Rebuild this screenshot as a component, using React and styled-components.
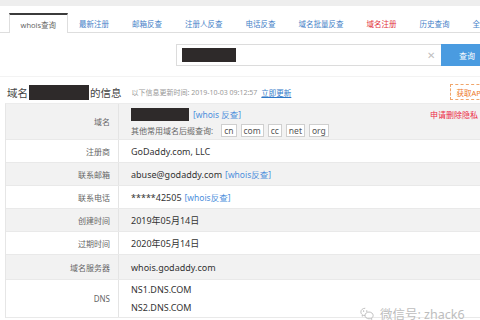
import React from "react";
import styled, { createGlobalStyle } from "styled-components";

const GlobalStyle = createGlobalStyle`
  html, body {
    margin: 0;
    padding: 0;
    overflow: hidden;
    background: #fff;
  }
  body {
    font-family: "Noto Sans", "Noto Sans CJK SC", sans-serif;
    color: #333;
  }
`;

const Page = styled.div`
  position: relative;
  width: 496px;
  height: 320px;
  overflow: hidden;
`;

const TopStrip = styled.div`
  height: 6px;
  background: #eeeeee;
`;

const TabBar = styled.div`
  display: flex;
  margin-top: 6px;
  padding-left: 9px;
  height: 20px;
  border-bottom: 1px solid #dedede;
`;

const Tab = styled.div`
  display: flex;
  align-items: center;
  padding: 0 10.5px;
  font-size: 7.5px;
  white-space: nowrap;
  box-sizing: border-box;
  color: ${(p) => (p.$active ? "#666" : p.$red ? "#e2333b" : "#4682c8")};
  background: #fff;
  border-top: 2px solid ${(p) => (p.$active ? "#3b3b3b" : "transparent")};
  border-left: 1px solid ${(p) => (p.$active ? "#dedede" : "transparent")};
  border-right: 1px solid ${(p) => (p.$active ? "#dedede" : "transparent")};
  margin-bottom: ${(p) => (p.$active ? "-1px" : "0")};
  margin-top: 1px;
`;

const SearchRow = styled.div`
  display: flex;
  margin-top: 11px;
  padding-left: 176px;
  padding-bottom: 10px;
  border-bottom: 1px solid #f3f3f3;
`;

const SearchBox = styled.div`
  display: flex;
  align-items: center;
  width: 265px;
  height: 22px;
  box-sizing: border-box;
  border: 1px solid #dcdcdc;
  border-right: none;
  padding: 0 6px 0 5px;
`;

const Redact = styled.div`
  width: ${(p) => p.$w}px;
  height: ${(p) => p.$h}px;
  background: #2e2a2a;
  flex-shrink: 0;
`;

const Clear = styled.span`
  margin-left: auto;
  color: #c0c0c0;
  font-size: 10px;
  line-height: 1;
`;

const SearchButton = styled.div`
  width: 52px;
  height: 22px;
  background: #4a9be0;
  color: #fff;
  font-size: 8px;
  display: flex;
  align-items: center;
  justify-content: center;
`;

const InfoHeader = styled.div`
  display: flex;
  align-items: center;
  height: 20px;
  margin-top: 5px;
  padding: 0 6px 0 6px;
`;

const Title = styled.span`
  font-size: 10.5px;
  color: #444;
  white-space: nowrap;
  margin: 0 1px;
`;

const UpdateNote = styled.span`
  font-size: 7px;
  color: #999;
  margin-left: 9px;
  white-space: nowrap;
`;

const UpdateLink = styled.a`
  font-size: 7.5px;
  color: #2f78c8;
  text-decoration: underline;
  margin-left: 4px;
  white-space: nowrap;
`;

const ApiButton = styled.div`
  margin-left: auto;
  width: 40px;
  height: 16px;
  box-sizing: border-box;
  border: 1px dashed #f0a56a;
  color: #ee7a2a;
  font-size: 7.5px;
  display: flex;
  align-items: center;
  justify-content: center;
  white-space: nowrap;
`;

const Table = styled.div`
  margin: 1px 6px 0 5px;
  border-left: 1px solid #e6e6e6;
  border-top: 1px solid #ececec;
`;

const Row = styled.div`
  display: grid;
  grid-template-columns: 113px 1fr;
  min-height: ${(p) => p.$h || 22}px;
  background: ${(p) => (p.$alt ? "#f2f2f2" : "#fff")};
  border-bottom: 1px solid #e9e9e9;
`;

const Label = styled.div`
  display: flex;
  align-items: center;
  justify-content: flex-end;
  padding-right: 8px;
  border-right: 1px solid #e4e4e4;
  color: #666;
  font-size: 8px;
  white-space: nowrap;
`;

const Value = styled.div`
  display: flex;
  flex-direction: column;
  justify-content: center;
  padding: 0 12px;
  font-size: 9px;
  color: #333;
  white-space: nowrap;
`;

const Line = styled.div`
  display: flex;
  align-items: center;
  gap: ${(p) => p.$gap || 0}px;
  height: ${(p) => p.$h || 16}px;
`;

const Link = styled.a`
  color: #4d8fdc;
  font-size: 8.5px;
  margin-left: ${(p) => p.$ml ?? 3}px;
`;

const Hint = styled.span`
  font-size: 8px;
  color: #666;
  margin-right: 4px;
`;

const Suffix = styled.span`
  display: inline-flex;
  align-items: center;
  height: 11px;
  padding: 0 2px;
  border: 1px solid #cfcfcf;
  background: #fff;
  font-size: 8.5px;
  color: #555;
`;

const Privacy = styled.span`
  margin-left: auto;
  color: #ec2a45;
  font-size: 8px;
`;

const Watermark = styled.div`
  position: absolute;
  left: 360px;
  top: 304px;
  display: flex;
  align-items: center;
  gap: 6px;
  color: #bdbdbd;
  font-size: 12.5px;
  white-space: nowrap;
  text-shadow: 0 0 2px #fff;
`;

function WechatIcon() {
  return (
    <svg width="14" height="13" viewBox="0 0 24 22" fill="none" stroke="#bbb" strokeWidth="1.6">
      <path d="M9 2C4.6 2 1.5 4.9 1.5 8.3c0 2 1 3.6 2.7 4.8L3.5 15.6l2.9-1.5c.8.2 1.7.4 2.6.4" />
      <path d="M15.5 8.5c-3.9 0-7 2.6-7 5.8s3.1 5.8 7 5.8c.8 0 1.6-.1 2.3-.3l2.6 1.3-.6-2.2c1.6-1.1 2.7-2.7 2.7-4.6 0-3.2-3.1-5.8-7-5.8z" />
      <circle cx="6.3" cy="6.8" r=".6" fill="#bbb" />
      <circle cx="11.7" cy="6.8" r=".6" fill="#bbb" />
    </svg>
  );
}

const tabs = [
  "whois查询",
  "最新注册",
  "邮箱反查",
  "注册人反查",
  "电话反查",
  "域名批量反查",
  "域名注册",
  "历史查询",
  "全部查询",
];

const rows = [
  { label: "注册商", value: "GoDaddy.com, LLC" },
  { label: "联系邮箱", value: "abuse@godaddy.com", link: "[whois反查]", alt: true },
  { label: "联系电话", value: "*****42505", link: "[whois反查]" },
  { label: "创建时间", value: "2019年05月14日", alt: true },
  { label: "过期时间", value: "2020年05月14日" },
  { label: "域名服务器", value: "whois.godaddy.com", alt: true, h: 24 },
];

export default function App() {
  return (
    <>
      <GlobalStyle />
      <Page>
        <TopStrip />
        <TabBar>
          {tabs.map((t, i) => (
            <Tab key={t} $active={i === 0} $red={t === "域名注册"}>
              {t}
            </Tab>
          ))}
        </TabBar>

        <SearchRow>
          <SearchBox>
            <Redact $w={54} $h={14} />
            <Clear>✕</Clear>
          </SearchBox>
          <SearchButton>查询</SearchButton>
        </SearchRow>

        <InfoHeader>
          <Title>域名</Title>
          <Redact $w={60} $h={15} />
          <Title>的信息</Title>
          <UpdateNote>以下信息更新时间: 2019-10-03 09:12:57</UpdateNote>
          <UpdateLink>立即更新</UpdateLink>
          <ApiButton>获取API</ApiButton>
        </InfoHeader>

        <Table>
          <Row $alt $h={35}>
            <Label>域名</Label>
            <Value>
              <Line $h={17}>
                <Redact $w={58} $h={13} />
                <Link $ml={4}>[whois 反查]</Link>
                <Privacy>申请删除隐私</Privacy>
              </Line>
              <Line $h={15} $gap={4}>
                <Hint>其他常用域名后缀查询:</Hint>
                {["cn", "com", "cc", "net", "org"].map((s) => (
                  <Suffix key={s}>{s}</Suffix>
                ))}
              </Line>
            </Value>
          </Row>
          {rows.map((r) => (
            <Row key={r.label} $alt={r.alt} $h={r.h}>
              <Label>{r.label}</Label>
              <Value>
                <Line>
                  {r.value}
                  {r.link && <Link>{r.link}</Link>}
                </Line>
              </Value>
            </Row>
          ))}
          <Row $h={37}>
            <Label>DNS</Label>
            <Value>
              <Line $h={18}>NS1.DNS.COM</Line>
              <Line $h={18}>NS2.DNS.COM</Line>
            </Value>
          </Row>
        </Table>

        <Watermark>
          <WechatIcon />
          微信号: zhack6
        </Watermark>
      </Page>
    </>
  );
}
